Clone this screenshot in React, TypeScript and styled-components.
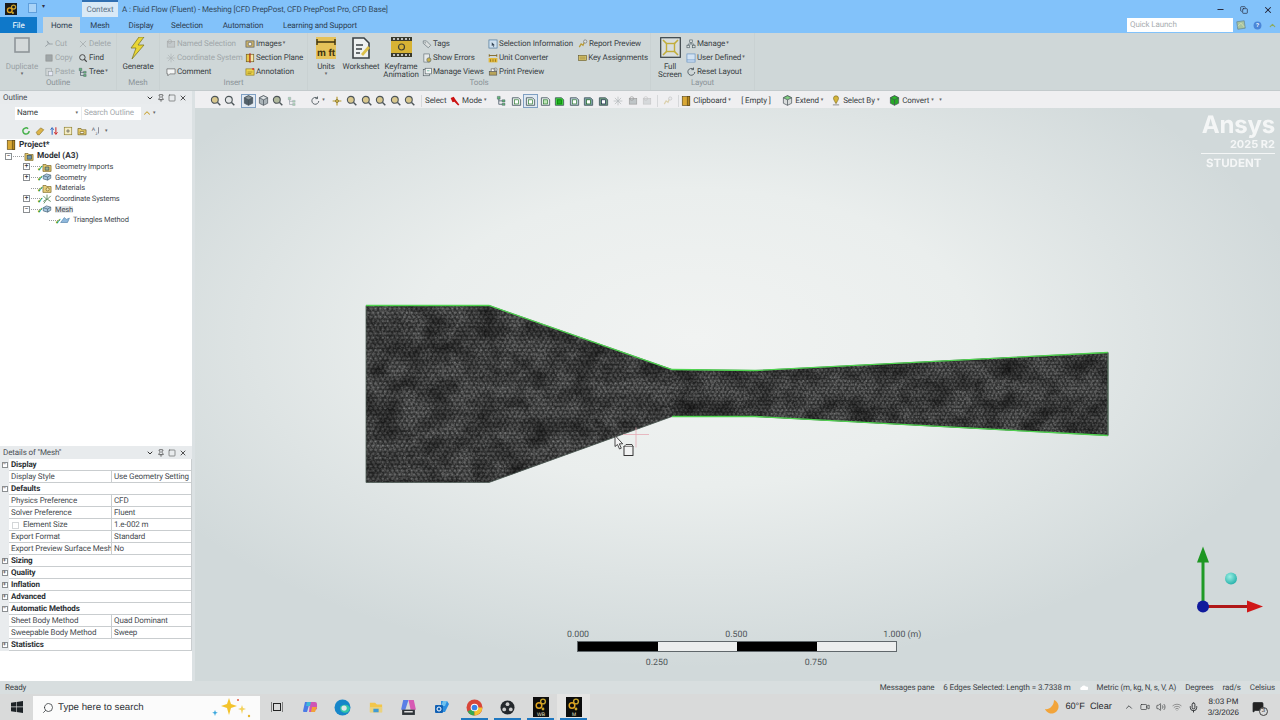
import React from "react";
import styled, { createGlobalStyle } from "styled-components";
import { Search, ChevronUp, Volume2, Wifi, Mic, MessageSquare, Minus, X, Pin, Square, ChevronDown, Video, Copy } from "lucide-react";

const FONT = `Roboto, "Noto Sans", "Liberation Sans", sans-serif`;

const Global = createGlobalStyle`
  * { box-sizing: border-box; }
  html, body { margin: 0; padding: 0; width: 1280px; height: 720px; overflow: hidden; }
  body { font: 8px/1 ${FONT}; letter-spacing: -0.12px; color: #3a3f44; background: #d8dede; text-rendering: geometricPrecision; }
`;

const Page = styled.div`
  display: flex;
  flex-direction: column;
  width: 1280px;
  height: 720px;
`;

/* ---------- icons ---------- */

const gold = "#c8a52c";
const glyphs: Record<string, React.ReactNode> = {
  scissors: <path d="M2 12l5-4 7 0M7 8l-2-5M5 3l4 5" fill="none" stroke="#8c9498" strokeWidth="1.6" />,
  copy: <rect x="3" y="3" width="10" height="10" fill="#8f9699" stroke="#777" />,
  paste: <><rect x="3" y="2" width="9" height="12" fill="#cfd3d4" stroke="#8c9498" /><rect x="7" y="7" width="7" height="7" fill="#eef" stroke="#8c9498" /></>,
  del: <path d="M3 3l10 10M13 3L3 13" stroke="#a4aaad" strokeWidth="1.6" />,
  find: <><circle cx="7" cy="7" r="4.4" fill="none" stroke="#444" strokeWidth="1.5" /><path d="M10 10l4 4" stroke="#444" strokeWidth="1.8" /></>,
  tree: <><path d="M2 2h4v4H2zM9 7h4v3H9zM9 12h4v3H9z" fill="#6b7" stroke="#345" strokeWidth=".6" /><path d="M4 6v7.5h5M4 8.5h5" fill="none" stroke="#345" /></>,
  named: <><rect x="2" y="4" width="12" height="9" fill="#bfc5c7" stroke="#999" /><circle cx="6" cy="4" r="3" fill="none" stroke="#999" /></>,
  coord: <path d="M8 1v14M1 8h14M3 3l10 10M13 3L3 13" stroke="#a8adb0" strokeWidth="1.2" />,
  pan: <><path d="M8 1v14M1 8h14" stroke="#b5952a" strokeWidth="1.8" /><circle cx="8" cy="8" r="2.4" fill="#d9bf52" stroke="#6a5a1a" /></>,
  comment: <path d="M1.5 3h13v8H6l-3 3v-3H1.5z" fill="#f4f6f6" stroke="#555" />,
  images: <><rect x="1.5" y="3" width="13" height="10" fill="#c9b26a" stroke="#555" /><circle cx="8" cy="8" r="3" fill="#eee" stroke="#555" /></>,
  section: <><rect x="2" y="2" width="6" height="12" fill="#e8c84a" stroke="#6a5313" /><rect x="8" y="2" width="6" height="12" fill="#f4e7a5" stroke="#6a5313" /><path d="M8 0v16" stroke="#c22" strokeWidth="1.4" /></>,
  annotation: <><rect x="1.5" y="3" width="13" height="10" fill="#ecd44f" stroke="#8a7414" /><path d="M4 8h8M4 10.5h6" stroke="#8a7414" /><circle cx="13" cy="3" r="1.6" fill="#d33" /></>,
  tags: <><path d="M2 3l5 0 7 7-4 4-8-7z" fill="#d9dddd" stroke="#5d6a70" /><circle cx="5" cy="6" r="1" fill="#5d6a70" /></>,
  errors: <><rect x="3" y="1.5" width="9" height="13" fill="#e6e9e9" stroke="#5d6a70" /><circle cx="11" cy="11" r="3.4" fill="#c9b24a" stroke="#5d6a70" /></>,
  views: <><rect x="2" y="4" width="10" height="10" fill="#e3e7e7" stroke="#4c5a5f" /><rect x="5" y="2" width="10" height="9" fill="#f3f5f5" stroke="#4c5a5f" /><path d="M8 6h4" stroke="#4a8" /></>,
  selinfo: <><rect x="1.5" y="1.5" width="13" height="13" fill="#cfe0ee" stroke="#3d6d96" /><path d="M6 5l5 5-2 0 1 3-1 0-1-3-2 1z" fill="#345" /></>,
  converter: <><path d="M2 4h12M2 2v4M14 2v4" stroke="#7a5a10" strokeWidth="1.3" fill="none" /><rect x="1" y="8" width="14" height="7" fill="#e2b93a" /><path d="M4 14v-4M8 14v-4M12 14v-4" stroke="#7a5a10" /></>,
  print: <><rect x="2" y="7" width="12" height="6" fill="#b8a45a" stroke="#555" /><rect x="5" y="3" width="6" height="4" fill="#fff" stroke="#555" /><circle cx="12" cy="4" r="2.6" fill="none" stroke="#777" /></>,
  report: <><path d="M2 13l3-5 3 2 3-7" stroke="#b89a35" strokeWidth="2" fill="none" /><circle cx="11.5" cy="4" r="2.6" fill="#dfe3e3" stroke="#666" /></>,
  keys: <><rect x="1" y="3.5" width="14" height="9" fill="#d9c46b" stroke="#5b5124" /><path d="M3 6.5h10M3 9.5h10" stroke="#8a7a34" /></>,
  manage: <><rect x="6" y="1.5" width="4" height="4" fill="#dfe3e3" stroke="#4a5a60" /><rect x="1.5" y="10" width="4" height="4" fill="#dfe3e3" stroke="#4a5a60" /><rect x="10.5" y="10" width="4" height="4" fill="#dfe3e3" stroke="#4a5a60" /><path d="M8 6v2M3.5 10V8h9v2" fill="none" stroke="#4a5a60" /></>,
  user: <><rect x="1.5" y="1.5" width="13" height="13" fill="#d3e3f3" stroke="#5b8bc0" /><path d="M1.5 11h13" stroke="#5b8bc0" /></>,
  reset: <path d="M12 3.5A5.5 5.5 0 1 0 14 8M12 .8v3.4H8.6" fill="none" stroke="#4a555a" strokeWidth="1.4" />,
  refresh: <path d="M13 8a5 5 0 1 1-1.6-3.7" fill="none" stroke="#46b04a" strokeWidth="2.4" />,
  eraser: <path d="M2 10l7-7 5 3-7 8H4z" fill="#dcb44a" stroke="#8a7020" />,
  sort: <><path d="M5 14V4M2.5 6L5 2.5 7.5 6" fill="none" stroke="#2b66c0" strokeWidth="1.6" /><path d="M11 2v10M8.5 10l2.5 3.5 2.5-3.5" fill="none" stroke="#cc2222" strokeWidth="1.6" /></>,
  expand: <><rect x="2" y="2" width="12" height="12" fill="#f4ecc4" stroke="#8a7a24" /><path d="M8 5v6M5 8h6" stroke="#444" /></>,
  folderx: <><path d="M1.5 4h5l1 2h7v8h-13z" fill="#e6cc6a" stroke="#6d5a1c" /><path d="M5 9h6v3H5z" fill="#fff" stroke="#6d5a1c" /></>,
  az: <><text x="1" y="8" fontSize="8" fill="#556" fontFamily="Liberation Sans">A</text><text x="7" y="15" fontSize="7" fill="#556" fontFamily="Liberation Sans">z</text><path d="M12 2v10" stroke="#556" /></>,
  book: <><rect x="2" y="1" width="12" height="14" fill="#d9a835" stroke="#5a4410" /><rect x="10" y="1" width="4" height="14" fill="#b78820" stroke="#5a4410" /></>,
  model: <><path d="M1.5 4h5l1 1.6h7V15h-13z" fill="#e3c76a" stroke="#6d5a1c" /><rect x="5" y="7" width="7" height="6" fill="#6b93a8" stroke="#345" /></>,
  geoimp: <><path d="M1.5 4h5l1 1.6h7V15h-13z" fill="#e3c76a" stroke="#6d5a1c" /><path d="M5 8h6v5H5z" fill="#9bb08c" stroke="#345" /></>,
  geo: <><path d="M2 6l5-3 7 2v5l-5 3-7-2z" fill="#a9c7de" stroke="#3b566a" /><path d="M2 6l7 2 5-3M9 8v5" fill="none" stroke="#3b566a" /></>,
  mats: <><path d="M1.5 4h5l1 1.6h7V15h-13z" fill="#e7cf7c" stroke="#6d5a1c" /><circle cx="9" cy="10" r="2.6" fill="#f0e2a8" stroke="#6d5a1c" /></>,
  axes: <path d="M8 8V1M8 8l6 4M8 8l-6 4M2 3l5 5M14 3L9 8M3 15l5-7" stroke="#4c7f4c" strokeWidth="1.3" fill="none" />,
  tri: <path d="M1 12L7 4l3 3 5-2-3 7z" fill="#8fb8dc" stroke="#4d7da6" />,
  map: <><rect x="2" y="2" width="12" height="12" fill="#a7c4a0" stroke="#5f7f8f" transform="rotate(-8 8 8)" /><path d="M3 10l5-5 5 6" stroke="#e6e6c0" fill="none" /></>,
  help: <><circle cx="8" cy="8" r="7" fill="#4a86d8" /><text x="8" y="11.500" textAnchor="middle" fontSize="10" fontWeight="700" fill="#fff" fontFamily="Liberation Sans">?</text></>,
};

const Glyph = ({ name, size = 9, opacity }: { name: string; size?: number; opacity?: number }) => (
  <svg width={size} height={size} viewBox="0 0 16 16" style={opacity ? { opacity } : undefined}>
    {glyphs[name]}
  </svg>
);

/* ---------- title bar ---------- */

const TitleBar = styled.header`
  background: #82c2fa;
  height: 33px;
  display: flex;
  flex-direction: column;
  flex: none;
`;

const TitleRow = styled.div`
  height: 17px;
  display: flex;
  align-items: stretch;
`;

const AppBadge = styled.div`
  width: 12px;
  height: 12px;
  margin: 3px 11px 0 5px;
  background: #1a1a1a;
  display: flex;
  align-items: center;
  justify-content: center;
  flex: none;
`;

const SaveIcon = styled.div`
  width: 9px;
  height: 10px;
  margin: 3px 5px 0 0;
  border: 1px solid #5f9fdc;
  background: #a9d3f7;
`;

const QuickCaret = styled.div`
  width: 40px;
  color: #334;
  font-size: 6px;
  padding-top: 4px;
`;

const ContextTab = styled.div`
  width: 36px;
  background: #d9e9f6;
  border-top: 2px solid #2f6fb2;
  color: #5d7488;
  display: flex;
  align-items: center;
  justify-content: center;
`;

const TitleText = styled.div`
  margin-left: 4px;
  padding-top: 3px;
  flex: 1;
  color: #33495c;
  display: flex;
  align-items: center;
`;

const WinButton = styled.div`
  width: 24px;
  color: #223;
  display: flex;
  align-items: center;
  justify-content: center;
  padding-top: 2px;
`;

const TabRow = styled.nav`
  height: 16px;
  display: flex;
  align-items: stretch;
`;

const Tab = styled.div<{ $w: number; $kind?: "file" | "active" }>`
  width: ${(p) => p.$w}px;
  padding-top: 1px;
  display: flex;
  align-items: center;
  justify-content: center;
  color: ${(p) => (p.$kind === "file" ? "#fff" : "#2d4052")};
  background: ${(p) => (p.$kind === "file" ? "#0f78c9" : p.$kind === "active" ? "#cfd7d8" : "transparent")};
`;

const TabSpacer = styled.div`
  flex: 1;
`;

const QuickLaunch = styled.div`
  width: 106px;
  height: 14px;
  margin-top: 1px;
  background: #fff;
  color: #a9adb0;
  padding-left: 3px;
  display: flex;
  align-items: center;
`;

const HelpIcons = styled.div`
  width: 47px;
  padding: 0 3px 0 3px;
  display: flex;
  align-items: center;
  justify-content: space-between;
`;

/* ---------- ribbon ---------- */

const Ribbon = styled.section`
  height: 58px;
  background: #cfd7d8;
  border-bottom: 1px solid #c3cacc;
  display: flex;
  flex: none;
`;

const Group = styled.div<{ $w: number }>`
  width: ${(p) => p.$w}px;
  display: flex;
  flex-direction: column;
  padding-top: 3px;
  border-right: 1px solid #c9d1d2;
`;

const GroupBody = styled.div`
  height: 42px;
  display: flex;
`;

const GroupLabel = styled.div`
  text-align: center;
  color: #8b9498;
  padding-top: 1px;
`;

const Big = styled.div<{ $w: number; $off?: boolean }>`
  width: ${(p) => p.$w}px;
  display: flex;
  flex-direction: column;
  align-items: center;
  color: ${(p) => (p.$off ? "#9aa2a6" : "#3a3f44")};
  line-height: 8px;
  text-align: center;
  flex: none;
`;

const BigIcon = styled.div`
  height: 27px;
  padding-top: 1px;
  display: flex;
  align-items: flex-start;
  justify-content: center;
  flex: none;
`;

const Caret = styled.span`
  color: #666;
  font-size: 5px;
  line-height: 7px;
`;

const SmallCol = styled.div<{ $w: number }>`
  width: ${(p) => p.$w}px;
  display: flex;
  flex-direction: column;
  flex: none;
`;

const SmallBtn = styled.div<{ $off?: boolean }>`
  height: 14px;
  padding-top: 1px;
  display: flex;
  align-items: center;
  gap: 1px;
  white-space: nowrap;
  color: ${(p) => (p.$off ? "#a0a7aa" : "#3a3f44")};
`;

const Small = ({ icon, text, off, menu }: { icon: string; text: string; off?: boolean; menu?: boolean }) => (
  <SmallBtn $off={off}>
    <Glyph name={icon} size={10} opacity={off ? 0.75 : undefined} />
    {text}
    {menu && <Caret>▾</Caret>}
  </SmallBtn>
);

const Gap = styled.div<{ $w: number }>`
  width: ${(p) => p.$w}px;
  flex: none;
`;

/* ---------- body ---------- */

const Body = styled.main`
  flex: 1;
  min-height: 0;
  display: flex;
`;

const LeftPanel = styled.aside`
  width: 195px;
  flex: none;
  display: flex;
  flex-direction: column;
  background: #e9ecee;
  border-right: 3px solid #dbe1e3;
`;

const PaneHead = styled.div`
  height: 13px;
  display: flex;
  align-items: center;
  padding: 1px 5px 0 3px;
  gap: 3px;
  color: #4a5055;
  background: #e8ebed;
  flex: none;
`;

const Dots = styled.div`
  flex: 1;
  height: 4px;
  background-image: radial-gradient(#b4b9bc 0.5px, transparent 0.6px);
  background-size: 2px 2px;
`;

const Grip = styled.div`
  width: 4px;
  height: 12px;
  flex: none;
  background-image: radial-gradient(#aeb3b6 0.5px, transparent 0.6px);
  background-size: 2px 2px;
`;

const PaneTools = styled.div`
  display: flex;
  align-items: center;
  gap: 3px;
  color: #333;
`;

const FilterRow = styled.div`
  height: 17px;
  display: flex;
  align-items: center;
  padding-left: 6px;
  padding-top: 1px;
  gap: 1px;
  flex: none;
`;

const NameBox = styled.div`
  width: 66px;
  height: 13px;
  margin-left: 4px;
  background: #fff;
  padding: 0 3px 0 2px;
  display: flex;
  align-items: center;
  justify-content: space-between;
  color: #3a3f44;
`;

const SearchBox = styled.div`
  width: 59px;
  height: 13px;
  background: #fff;
  padding-left: 2px;
  color: #a5aaad;
  display: flex;
  align-items: center;
`;

const IconRow = styled.div`
  height: 18px;
  display: flex;
  align-items: center;
  padding-left: 6px;
  padding-top: 2px;
  gap: 4px;
  flex: none;
`;

const Tree = styled.div`
  flex: 1;
  background: #fff;
  padding-top: 1px;
`;

const TreeRow = styled.div`
  height: 10.7px;
  display: flex;
  align-items: center;
  white-space: nowrap;
`;

const Indent = styled.div<{ $w: number }>`
  width: ${(p) => p.$w}px;
  flex: none;
`;

const Expander = styled.div`
  width: 7px;
  height: 7px;
  margin: 0 1px;
  border: 1px solid #8b8f92;
  background: #fff;
  color: #333;
  font-size: 7px;
  line-height: 4px;
  text-align: center;
  flex: none;
`;

const Connector = styled.div`
  width: 11px;
  height: 0;
  border-top: 1px dotted #9a9ea0;
  flex: none;
`;

const NoExpander = styled.div`
  width: 9px;
  flex: none;
`;

const Node = styled.div`
  position: relative;
  width: 10px;
  height: 10px;
  margin-right: 3px;
  flex: none;
`;

const Check = styled.span`
  position: absolute;
  left: -5px;
  top: 3px;
  color: #2c9a30;
  font-size: 8px;
  line-height: 8px;
  font-weight: 700;
`;

const TreeLabel = styled.span<{ $bold?: boolean; $sel?: boolean }>`
  font-size: ${(p) => (p.$bold ? "8.300px" : "7.500px")};
  letter-spacing: ${(p) => (p.$bold ? "0" : "-0.15px")};
  font-weight: ${(p) => (p.$bold ? 700 : 400)};
  color: ${(p) => (p.$bold ? "#2d3136" : "#454a4f")};
  background: ${(p) => (p.$sel ? "#e4e7e9" : "transparent")};
`;

const Details = styled.div`
  height: 235px;
  flex: none;
  display: flex;
  flex-direction: column;
  background: #fff;
`;

const DetailRow = styled.div`
  display: grid;
  grid-template-columns: 9px 103px 80px;
  height: 12px;
  background: #eef0f1;
`;

const Gutter = styled.div`
  display: flex;
  align-items: center;
  justify-content: center;
  background: #e9ecee;
`;

const DetailCell = styled.div<{ $span?: boolean; $head?: boolean }>`
  ${(p) => (p.$span ? "grid-column: 2 / 4;" : "")}
  display: flex;
  align-items: center;
  gap: 3px;
  padding: 1px 0 0 2px;
  background: #fff;
  border-right: 1px solid #c9cdcf;
  border-bottom: 1px solid #c9cdcf;
  white-space: nowrap;
  overflow: hidden;
  font-weight: ${(p) => (p.$head ? 700 : 400)};
  color: ${(p) => (p.$head ? "#2b2f33" : "#474c51")};
`;

const MiniExpander = styled(Expander)`
  width: 6px;
  height: 6px;
  margin: 0;
  font-size: 6px;
  line-height: 3px;
`;

const CheckBox = styled.span`
  width: 7px;
  height: 7px;
  margin-left: 1px;
  margin-right: 1px;
  border: 1px solid #d3d6d8;
`;

/* ---------- graphics area ---------- */

const Main = styled.div`
  flex: 1;
  min-width: 0;
  display: flex;
  flex-direction: column;
`;

const Toolbar = styled.div`
  height: 17px;
  background: #efeff1;
  display: flex;
  align-items: center;
  padding: 2px 0 0 5px;
  flex: none;
  color: #3a3f44;
`;

const Tool = styled.div<{ $sel?: boolean }>`
  width: 14.6px;
  height: 14px;
  display: flex;
  align-items: center;
  justify-content: center;
  flex: none;
  background: ${(p) => (p.$sel ? "#e1e9f2" : "transparent")};
  box-shadow: ${(p) => (p.$sel ? "inset 0 0 0 1px #7f9fc2" : "none")};
`;

const ToolText = styled.div<{ $w: number }>`
  width: ${(p) => p.$w}px;
  display: flex;
  align-items: center;
  gap: 2px;
  white-space: nowrap;
  flex: none;
`;

const Sep = styled.div<{ $w: number }>`
  width: ${(p) => p.$w}px;
  height: 12px;
  display: flex;
  justify-content: center;
  flex: none;
  &::after {
    content: "";
    width: 1px;
    background: #d6d8da;
  }
`;

const Viewport = styled.div`
  flex: 1;
  position: relative;
  overflow: hidden;
  background:
    radial-gradient(ellipse 620px 330px at 500px 230px, #f1f3f2 0%, #eaeeed 45%, rgba(226, 232, 232, 0) 100%),
    #d1d9da;
`;

const Canvas = styled.svg`
  position: absolute;
  inset: 0;
  width: 100%;
  height: 100%;
`;

const Brand = styled.div`
  position: absolute;
  right: 5px;
  top: 4px;
  width: 74px;
  color: #fff;
  opacity: 0.78;
  font-family: "Inter", "Liberation Sans", sans-serif;
  font-weight: 700;
  text-align: right;
  letter-spacing: 0;
`;

const BrandName = styled.div`
  font-size: 24px;
  line-height: 26px;
  letter-spacing: -0.2px;
`;

const BrandYear = styled.div`
  font-size: 11px;
  line-height: 13px;
  padding-bottom: 2px;
  border-bottom: 1px solid #fff;
`;

const BrandTier = styled.div`
  font-size: 11.5px;
  line-height: 19px;
  text-align: left;
  padding-left: 5px;
`;

const Scale = styled.div`
  position: absolute;
  left: 382px;
  top: 533px;
  width: 320px;
  height: 11px;
  display: grid;
  grid-template-columns: repeat(4, 1fr);
  border: 1px solid #60676b;
`;

const ScaleBlock = styled.div<{ $dark: boolean }>`
  background: ${(p) => (p.$dark ? "#000" : "#eceeee")};
`;

const ScaleTick = styled.span<{ $at: number; $low?: boolean }>`
  position: absolute;
  left: ${(p) => p.$at}%;
  top: ${(p) => (p.$low ? "16px" : "-12px")};
  transform: translateX(-50%);
  font-size: 8.8px;
  line-height: 10px;
  letter-spacing: 0;
  color: #4d5458;
  white-space: nowrap;
`;

/* ---------- status bar and task bar ---------- */

const StatusRow = styled.div`
  height: 13px;
  flex: none;
  display: flex;
  align-items: center;
  justify-content: space-between;
  background: #d8dedf;
  color: #3f4448;
  padding: 0 5px;
`;

const StatusRight = styled.div`
  display: flex;
  align-items: center;
  gap: 9px;
`;

const Taskbar = styled.footer`
  height: 26px;
  flex: none;
  background: #d9dada;
  display: flex;
  align-items: stretch;
  color: #26292c;
  letter-spacing: 0;
`;

const Start = styled.div`
  width: 33px;
  display: flex;
  align-items: center;
  justify-content: center;
`;

const SearchBar = styled.div`
  width: 227px;
  margin-top: 2px;
  background: #fbfbfb;
  display: flex;
  align-items: center;
  padding: 0 5px 0 9px;
  gap: 4px;
  font-size: 9.7px;
  color: #2e3236;
  font-family: "Liberation Sans", sans-serif;
`;

const SearchArt = styled.span`
  margin-left: auto;
  display: flex;
`;

const Slot = styled.div<{ $open?: boolean; $active?: boolean }>`
  width: 33px;
  display: flex;
  align-items: center;
  justify-content: center;
  background: ${(p) => (p.$active ? "#e4e4e3" : "transparent")};
  position: relative;
  &::after {
    content: "";
    display: ${(p) => (p.$open || p.$active ? "block" : "none")};
    position: absolute;
    left: 3px;
    right: 3px;
    bottom: 0;
    height: 2px;
    background: #1f78c1;
  }
`;

const Tray = styled.div`
  margin-left: auto;
  display: flex;
  align-items: center;
  padding-right: 16px;
  font-family: "Liberation Sans", sans-serif;
`;

const Weather = styled.div`
  display: flex;
  align-items: center;
  gap: 5px;
  font-size: 9.2px;
  margin-right: 12px;
`;

const TrayIcons = styled.div`
  display: flex;
  align-items: center;
  gap: 6px;
  margin-right: 9px;
`;

const Clock = styled.div`
  font-size: 8px;
  line-height: 11px;
  text-align: center;
  margin-right: 13px;
`;

const Notify = styled.div`
  position: relative;
  display: flex;
`;

const NotifyCount = styled.span`
  position: absolute;
  right: -4px;
  bottom: -3px;
  width: 9px;
  height: 9px;
  border: 1px solid #444;
  border-radius: 50%;
  background: #d9dada;
  font-size: 6px;
  line-height: 7px;
  text-align: center;
`;

/* ---------- drawings ---------- */

const GearLogo = ({ size }: { size: number }) => (
  <svg width={size} height={size} viewBox="0 0 16 16">
    <circle cx="11" cy="4.5" r="3" fill="none" stroke={gold} strokeWidth="1.8" />
    <circle cx="5.5" cy="9" r="3.4" fill="none" stroke="#e0a520" strokeWidth="2" />
    <circle cx="10" cy="13" r="1.6" fill={gold} />
  </svg>
);

const Bolt = () => (
  <svg width="18" height="23" viewBox="0 0 18 23">
    <path d="M10 0L2 11h5l-4 11 12-14h-6l6-8z" fill="#e9d534" stroke="#7e7a2a" strokeWidth=".8" />
  </svg>
);

const Units = () => (
  <svg width="20" height="22" viewBox="0 0 20 22">
    <rect width="20" height="22" fill="#e5c25a" />
    <path d="M1 5h18M1 2v6M19 2v6" stroke="#3c3210" strokeWidth="1.4" fill="none" />
    <text x="10" y="19" textAnchor="middle" fontSize="10" fontWeight="700" fill="#3c3210" fontFamily="Liberation Sans">m ft</text>
  </svg>
);

const Sheet = () => (
  <svg width="20" height="22" viewBox="0 0 20 22">
    <path d="M2 1h11l5 5v15H2z" fill="#eef1f1" stroke="#3b4144" strokeWidth="1.6" />
    <path d="M5 8h7M5 12h6M5 16h4" stroke="#3b4144" strokeWidth="1.3" />
    <path d="M10 17l7-8 2 2-7 8z" fill="#dcc04a" />
  </svg>
);

const Film = () => (
  <svg width="21" height="20" viewBox="0 0 21 20">
    <rect width="21" height="20" fill="#3a3a2c" />
    <rect y="4" width="21" height="12" fill="#d7b334" />
    <path d="M2 2h2M6 2h2M10 2h2M14 2h2M18 2h1M2 18h2M6 18h2M10 18h2M14 18h2M18 18h1" stroke="#eee" strokeWidth="1.5" />
    <circle cx="10.5" cy="10" r="3" fill="none" stroke="#443" strokeWidth="1.2" />
  </svg>
);

const FullScreen = () => (
  <svg width="21" height="21" viewBox="0 0 21 21">
    <rect x=".7" y=".7" width="19.6" height="19.6" fill="#d9dedd" stroke="#384045" strokeWidth="1.2" />
    <rect x="6.5" y="6.5" width="8" height="8" fill="none" stroke="#c2ad3a" strokeWidth="1.4" />
    <path d="M3 3l4 4M18 3l-4 4M3 18l4-4M18 18l-4-4" stroke="#c2ad3a" strokeWidth="1.6" />
  </svg>
);

const Zoom = ({ c = "#c7a63a" }: { c?: string }) => (
  <svg width="11" height="11" viewBox="0 0 16 16">
    <circle cx="7" cy="7" r="5" fill={c} fillOpacity=".55" stroke="#4d5559" strokeWidth="1.6" />
    <path d="M11 11l4 4" stroke="#4d5559" strokeWidth="2" />
  </svg>
);

const Cube = ({ top = "#dfe4e6", side = "#8d989e", off }: { top?: string; side?: string; off?: boolean }) => (
  <svg width="11" height="11" viewBox="0 0 16 16" style={off ? { opacity: 0.5 } : undefined}>
    <path d="M8 1l6 3v8l-6 3-6-3V4z" fill={side} stroke="#465057" />
    <path d="M2 4l6 3 6-3-6-3z" fill={top} stroke="#465057" />
    <path d="M8 7v8" stroke="#465057" />
  </svg>
);

const SelBox = ({ fill = "#e9eced", mark = "#2e7d32", front = "#fff" }: { fill?: string; mark?: string; front?: string }) => (
  <svg width="11" height="11" viewBox="0 0 16 16">
    <path d="M2 4h9l3 3v8H2z" fill={fill} stroke="#43565f" strokeWidth="1.2" />
    <rect x="5" y="7" width="6" height="6" fill={front} stroke={mark} />
  </svg>
);

const Win = () => (
  <svg width="12" height="12" viewBox="0 0 12 12" fill="#1d2226">
    <path d="M0 1.7L5 1v4.6H0zM5.6.9L12 0v5.6H5.6zM0 6.2h5v4.7l-5-.7zM5.6 6.2H12V12l-6.4-.9z" />
  </svg>
);

const Sparkle = () => (
  <svg width="44" height="22" viewBox="0 0 44 22">
    <path d="M18 1l2 6 6 2-6 2-2 7-2-7-6-2 6-2z" fill="#f3c32c" />
    <path d="M31 8l1 3 3 1-3 1-1 4-1-4-3-1 3-1z" fill="#f3d25c" />
    <circle cx="27" cy="3" r="1" fill="#e2553d" />
    <path d="M4 13l.8 2 2 .8-2 .8L4 19l-.8-2.400-2-.8 2-.8z" fill="#3aa7dd" />
    <circle cx="38" cy="19" r="1.200" fill="#e6b52e" />
  </svg>
);

const Copilot = () => (
  <svg width="16" height="16" viewBox="0 0 16 16">
    <path d="M3 3h5L5 13H2a1 1 0 0 1-1-1z" fill="#4a7be6" />
    <path d="M8 3h5a2 2 0 0 1 2 2v5l-5 3H7z" fill="#cf55b4" />
    <path d="M5 3h4l-1 4H4z" fill="#3fb6d8" />
    <path d="M10 8h5l-2 5h-4z" fill="#f2a13a" />
  </svg>
);

const Edge = () => (
  <svg width="17" height="17" viewBox="0 0 16 16">
    <circle cx="8" cy="8" r="7.500" fill="#1686c9" />
    <path d="M15 9a5 4 0 0 0-9-2c-1 3 1 6 5 6 2 0 3-1 4-4z" fill="#33c6a8" />
    <circle cx="9.500" cy="8.500" r="2.500" fill="#dfe6e6" />
  </svg>
);

const Folder = () => (
  <svg width="14" height="14" viewBox="0 0 16 16">
    <path d="M1 3h6l2 2h6v9H1z" fill="#f2c64a" />
    <rect x="1" y="8" width="14" height="6" fill="#e9d27f" />
    <rect x="5" y="10" width="6" height="4" fill="#3f9bd4" />
  </svg>
);

const Store = () => (
  <svg width="17" height="17" viewBox="0 0 16 16">
    <path d="M3 1h5L5 10H1z" fill="#5a7fe6" />
    <path d="M8 1h5l2 9h-5z" fill="#d75ab4" />
    <rect x="2" y="10" width="12" height="5" fill="#2e3338" />
    <path d="M4 12h8" stroke="#ddd" strokeWidth="1.400" />
  </svg>
);

const Outlook = () => (
  <svg width="16" height="16" viewBox="0 0 16 16">
    <path d="M7 2h6l2 3-4 8H7z" fill="#2c8fe0" />
    <path d="M9 2l4 0-2 5H7z" fill="#70c2ee" />
    <rect x="1" y="6" width="8" height="8" rx="1" fill="#1261b4" />
    <circle cx="5" cy="10" r="2" fill="none" stroke="#fff" />
  </svg>
);

const Chrome = () => (
  <svg width="17" height="17" viewBox="0 0 16 16">
    <circle cx="8" cy="8" r="7.500" fill="#d8463a" />
    <path d="M8 8L1.500 11.700A7.500 7.500 0 0 0 8 15.500z" fill="#36a852" />
    <path d="M8 8h7.400A7.500 7.500 0 0 1 8 15.500z" fill="#f4c430" />
    <circle cx="8" cy="8" r="3.600" fill="#fff" />
    <circle cx="8" cy="8" r="2.700" fill="#3c82e6" />
  </svg>
);

const Obs = () => (
  <svg width="15" height="15" viewBox="0 0 16 16">
    <circle cx="8" cy="8" r="7.500" fill="#24282c" />
    <circle cx="8" cy="4.500" r="2" fill="#ccc" />
    <circle cx="4.500" cy="10" r="2" fill="#ccc" />
    <circle cx="11.500" cy="10" r="2" fill="#ccc" />
  </svg>
);

const AppTile = ({ label }: { label?: string }) => (
  <svg width="16" height="20" viewBox="0 0 16 20">
    <rect width="16" height="20" fill="#0d0d0d" />
    <circle cx="10" cy="4.500" r="2.400" fill="none" stroke={gold} strokeWidth="1.400" />
    <circle cx="6" cy="8.500" r="2.800" fill="none" stroke="#e0a520" strokeWidth="1.500" />
    <circle cx="10" cy="12" r="1.400" fill={gold} />
    <text x="8" y="18.500" textAnchor="middle" fontSize="5" fill="#e6e2c8" fontFamily="Liberation Sans">{label}</text>
  </svg>
);

/* ---------- mesh ---------- */

const outline =
  "366,306 489,306 672,370 755,371 1108,353 1108,436 755,417 672,417 489,483 366,483";

const MeshDrawing = () => (
  <Canvas viewBox="195 109 1085 572">
    <defs>
      <pattern id="tri" width="4.8" height="8.3" patternUnits="userSpaceOnUse">
        <rect width="4.8" height="8.3" fill="#2e2f2f" />
        <circle cx="1.2" cy="2" r="1.1" fill="#7c7e7e" />
        <circle cx="3.6" cy="6.150" r="1.1" fill="#7c7e7e" />
      </pattern>
      <pattern id="triFine" width="4.2" height="7.300" patternUnits="userSpaceOnUse">
        <rect width="4.2" height="7.300" fill="#2e2f2f" />
        <circle cx="1" cy="1.800" r="1" fill="#787a7a" />
        <circle cx="3.100" cy="5.450" r="1" fill="#787a7a" />
      </pattern>
      <clipPath id="duct">
        <polygon points={outline} />
      </clipPath>
      {/* patches where the triangles bunch up */}
      <filter id="blotch" x="0" y="0" width="100%" height="100%">
        <feTurbulence type="fractalNoise" baseFrequency="0.04 0.05" numOctaves="3" seed="7" />
        <feColorMatrix values="0 0 0 0 0  0 0 0 0 0  0 0 0 0 0  1.100 0 0 0 -0.380" />
      </filter>
      <filter id="speckle" x="0" y="0" width="100%" height="100%">
        <feTurbulence type="fractalNoise" baseFrequency="0.45" numOctaves="2" seed="3" />
        <feColorMatrix values="0 0 0 0 0.1  0 0 0 0 0.1  0 0 0 0 0.1  3 0 0 0 -1.200" />
      </filter>
      <radialGradient id="ball" cx="40%" cy="35%" r="65%">
        <stop offset="0" stopColor="#9af0e4" />
        <stop offset="1" stopColor="#2ab3ac" />
      </radialGradient>
    </defs>
    <polygon points={outline} fill="url(#tri)" />
    <polygon points="672,370 755,371 1108,353 1108,436 755,417 672,417" fill="url(#triFine)" />
    <g clipPath="url(#duct)">
      <rect x="366" y="306" width="742" height="177" filter="url(#speckle)" />
      <rect x="366" y="306" width="742" height="177" filter="url(#blotch)" />
    </g>
    <polygon points={outline} fill="none" stroke="#4c5a54" strokeWidth=".8" />
    <polyline points="366,306 489,306 672,370 755,371 1108,353" fill="none" stroke="#4fd34f" strokeWidth="1.300" />
    <polyline points="672,417 755,417 1108,436" fill="none" stroke="#4fd34f" strokeWidth="1.300" />
    <path d="M1108 353v83" stroke="#4f6a56" strokeWidth="1" />

    {/* pointer over the model */}
    <path d="M623 435h26M636 428v20" stroke="#e5a9b4" strokeWidth=".8" />
    <path d="M615 436v11l2.500-2 2 4.500 1.800-.8-2-4.400h3.400z" fill="#f4f4f4" stroke="#222" strokeWidth=".8" />
    <rect x="624" y="447" width="9" height="9" fill="#f2f3f3" stroke="#222" strokeWidth=".9" />
    <path d="M624 447l2-2h6l1 2" fill="#ddd" stroke="#222" strokeWidth=".8" />

    {/* triad */}
    <rect x="1201.500" y="560" width="3" height="47" fill="#1f9a26" />
    <path d="M1203 547l6 16h-12z" fill="#1e9622" />
    <rect x="1203" y="605.500" width="44" height="3" fill="#b01818" />
    <path d="M1263 607l-16 6v-12z" fill="#d01818" />
    <circle cx="1203" cy="607" r="6" fill="#101a9c" />
    <circle cx="1231" cy="579" r="6" fill="url(#ball)" />
  </Canvas>
);

/* ---------- data ---------- */

type DetailItem = { head: string; open?: boolean; rows?: [string, string, boolean?][] };

const details: DetailItem[] = [
  { head: "Display", open: true, rows: [["Display Style", "Use Geometry Setting"]] },
  {
    head: "Defaults",
    open: true,
    rows: [
      ["Physics Preference", "CFD"],
      ["Solver Preference", "Fluent"],
      ["Element Size", "1.e-002 m", true],
      ["Export Format", "Standard"],
      ["Export Preview Surface Mesh", "No"],
    ],
  },
  { head: "Sizing" },
  { head: "Quality" },
  { head: "Inflation" },
  { head: "Advanced" },
  {
    head: "Automatic Methods",
    open: true,
    rows: [
      ["Sheet Body Method", "Quad Dominant"],
      ["Sweepable Body Method", "Sweep"],
    ],
  },
  { head: "Statistics" },
];

type TreeNode = { label: string; icon: string; indent: number; exp?: "+" | "−"; check?: boolean; bold?: boolean; sel?: boolean };

const treeNodes: TreeNode[] = [
  { label: "Model (A3)", icon: "model", indent: 4, exp: "−", bold: true },
  { label: "Geometry Imports", icon: "geoimp", indent: 22, exp: "+", check: true },
  { label: "Geometry", icon: "geo", indent: 22, exp: "+", check: true },
  { label: "Materials", icon: "mats", indent: 22, check: true },
  { label: "Coordinate Systems", icon: "axes", indent: 22, exp: "+", check: true },
  { label: "Mesh", icon: "geo", indent: 22, exp: "−", check: true, sel: true },
  { label: "Triangles Method", icon: "tri", indent: 40, check: true },
];

const PaneButtons = () => (
  <PaneTools>
    <ChevronDown size={8} strokeWidth={3} />
    <Pin size={8} strokeWidth={2} />
    <Square size={8} strokeWidth={1.500} />
    <X size={8} strokeWidth={2.500} />
  </PaneTools>
);

export default function App() {
  return (
    <Page>
      <Global />
      <TitleBar>
        <TitleRow>
          <AppBadge>
            <GearLogo size={11} />
          </AppBadge>
          <SaveIcon />
          <QuickCaret>▾</QuickCaret>
          <ContextTab>Context</ContextTab>
          <TitleText>A : Fluid Flow (Fluent) - Meshing [CFD PrepPost, CFD PrepPost Pro, CFD Base]</TitleText>
          <WinButton>
            <Minus size={9} strokeWidth={2.500} />
          </WinButton>
          <WinButton>
            <Copy size={8} strokeWidth={2} />
          </WinButton>
          <WinButton>
            <X size={10} strokeWidth={2.500} />
          </WinButton>
        </TitleRow>
        <TabRow>
          <Tab $w={37} $kind="file">File</Tab>
          <Gap $w={6} />
          <Tab $w={37} $kind="active">Home</Tab>
          <Tab $w={40}>Mesh</Tab>
          <Tab $w={42}>Display</Tab>
          <Tab $w={50}>Selection</Tab>
          <Tab $w={62}>Automation</Tab>
          <Tab $w={92}>Learning and Support</Tab>
          <TabSpacer />
          <QuickLaunch>Quick Launch</QuickLaunch>
          <HelpIcons>
            <Glyph name="map" size={10} />
            <Glyph name="help" size={9} />
            <ChevronUp size={9} color="#8cab62" strokeWidth={3} />
          </HelpIcons>
        </TabRow>
      </TitleBar>

      <Ribbon>
        <Group $w={117}>
          <GroupBody>
            <Big $w={44} $off>
              <BigIcon>
                <svg width="16" height="16" viewBox="0 0 16 16">
                  <rect x="1" y="1" width="14" height="14" fill="#d4d9da" stroke="#8e9599" strokeWidth="1.600" />
                </svg>
              </BigIcon>
              Duplicate
              <Caret>▾</Caret>
            </Big>
            <SmallCol $w={34}>
              <Small icon="scissors" text="Cut" off />
              <Small icon="copy" text="Copy" off />
              <Small icon="paste" text="Paste" off />
            </SmallCol>
            <SmallCol $w={38}>
              <Small icon="del" text="Delete" off />
              <Small icon="find" text="Find" />
              <Small icon="tree" text="Tree" menu />
            </SmallCol>
          </GroupBody>
          <GroupLabel>Outline</GroupLabel>
        </Group>

        <Group $w={43}>
          <GroupBody>
            <Big $w={42}>
              <BigIcon>
                <Bolt />
              </BigIcon>
              Generate
            </Big>
          </GroupBody>
          <GroupLabel>Mesh</GroupLabel>
        </Group>

        <Group $w={148}>
          <GroupBody>
            <Gap $w={6} />
            <SmallCol $w={79}>
              <Small icon="named" text="Named Selection" off />
              <Small icon="coord" text="Coordinate System" off />
              <Small icon="comment" text="Comment" />
            </SmallCol>
            <SmallCol $w={62}>
              <Small icon="images" text="Images" menu />
              <Small icon="section" text="Section Plane" />
              <Small icon="annotation" text="Annotation" />
            </SmallCol>
          </GroupBody>
          <GroupLabel>Insert</GroupLabel>
        </Group>

        <Group $w={343}>
          <GroupBody>
            <Gap $w={2} />
            <Big $w={32}>
              <BigIcon>
                <Units />
              </BigIcon>
              Units
              <Caret>▾</Caret>
            </Big>
            <Big $w={38}>
              <BigIcon>
                <Sheet />
              </BigIcon>
              Worksheet
            </Big>
            <Big $w={42}>
              <BigIcon>
                <Film />
              </BigIcon>
              Keyframe Animation
            </Big>
            <SmallCol $w={66}>
              <Small icon="tags" text="Tags" />
              <Small icon="errors" text="Show Errors" />
              <Small icon="views" text="Manage Views" />
            </SmallCol>
            <SmallCol $w={90}>
              <Small icon="selinfo" text="Selection Information" />
              <Small icon="converter" text="Unit Converter" />
              <Small icon="print" text="Print Preview" />
            </SmallCol>
            <SmallCol $w={70}>
              <Small icon="report" text="Report Preview" />
              <Small icon="keys" text="Key Assignments" />
            </SmallCol>
          </GroupBody>
          <GroupLabel>Tools</GroupLabel>
        </Group>

        <Group $w={104}>
          <GroupBody>
            <Gap $w={6} />
            <Big $w={26}>
              <BigIcon>
                <FullScreen />
              </BigIcon>
              Full Screen
            </Big>
            <Gap $w={3} />
            <SmallCol $w={68}>
              <Small icon="manage" text="Manage" menu />
              <Small icon="user" text="User Defined" menu />
              <Small icon="reset" text="Reset Layout" />
            </SmallCol>
          </GroupBody>
          <GroupLabel>Layout</GroupLabel>
        </Group>
      </Ribbon>

      <Body>
        <LeftPanel>
          <PaneHead>
            Outline
            <Dots />
            <PaneButtons />
          </PaneHead>
          <FilterRow>
            <Grip />
            <NameBox>
              Name
              <Caret>▾</Caret>
            </NameBox>
            <SearchBox>Search Outline</SearchBox>
            <ChevronUp size={10} color="#c9a22f" strokeWidth={2.500} />
            <Caret>▾</Caret>
          </FilterRow>
          <IconRow>
            <Grip />
            <Gap $w={3} />
            <Glyph name="refresh" size={10} />
            <Glyph name="eraser" size={10} />
            <Glyph name="sort" size={10} />
            <Glyph name="expand" size={10} />
            <Glyph name="folderx" size={10} />
            <Glyph name="az" size={10} />
            <Caret>▾</Caret>
          </IconRow>
          <Tree>
            <TreeRow>
              <Indent $w={6} />
              <Node>
                <Glyph name="book" size={10} />
              </Node>
              <TreeLabel $bold>Project*</TreeLabel>
            </TreeRow>
            {treeNodes.map((n) => (
              <TreeRow key={n.label}>
                <Indent $w={n.indent} />
                {n.exp ? <Expander>{n.exp}</Expander> : <NoExpander />}
                <Connector />
                <Node>
                  <Glyph name={n.icon} size={10} />
                  {n.check && <Check>✓</Check>}
                </Node>
                <TreeLabel $bold={n.bold} $sel={n.sel}>
                  {n.label}
                </TreeLabel>
              </TreeRow>
            ))}
          </Tree>
          <Details>
            <PaneHead>
              Details of "Mesh"
              <Dots />
              <PaneButtons />
            </PaneHead>
            {details.map((d) => (
              <React.Fragment key={d.head}>
                <DetailRow>
                  <Gutter>
                    <MiniExpander>{d.open ? "−" : "+"}</MiniExpander>
                  </Gutter>
                  <DetailCell $span $head>
                    {d.head}
                  </DetailCell>
                </DetailRow>
                {d.rows?.map(([k, v, box]) => (
                  <DetailRow key={k}>
                    <Gutter />
                    <DetailCell>
                      {box && <CheckBox />}
                      {k}
                    </DetailCell>
                    <DetailCell>{v}</DetailCell>
                  </DetailRow>
                ))}
              </React.Fragment>
            ))}
          </Details>
        </LeftPanel>

        <Main>
          <Toolbar>
            <Grip />
            <Gap $w={4} />
            <Tool><Zoom /></Tool>
            <Tool><Zoom c="#dde0e0" /></Tool>
            <Gap $w={4} />
            <Tool $sel><Cube top="#8d989e" side="#51606a" /></Tool>
            <Tool><Cube side="#aab3b8" /></Tool>
            <Tool><Zoom c="#7c8b55" /></Tool>
            <Tool><Glyph name="tree" size={10} opacity={0.5} /></Tool>
            <Gap $w={8} />
            <Tool><Glyph name="reset" size={10} /></Tool>
            <Caret>▾</Caret>
            <Gap $w={5} />
            <Tool><Glyph name="pan" size={10} /></Tool>
            <Tool><Zoom /></Tool>
            <Tool><Zoom /></Tool>
            <Tool><Zoom /></Tool>
            <Tool><Zoom /></Tool>
            <Tool><Zoom /></Tool>
            <Sep $w={8} />
            <ToolText $w={25}>Select</ToolText>
            <ToolText $w={44}>
              <svg width="10" height="10" viewBox="0 0 16 16">
                <path d="M1 3l5-2 3 5 6 8-2 1-6-6-3 1z" fill="#c11" />
              </svg>
              Mode<Caret>▾</Caret>
            </ToolText>
            <Tool><Glyph name="tree" size={11} /></Tool>
            <Tool><SelBox /></Tool>
            <Tool $sel><SelBox /></Tool>
            <Tool><SelBox front="#bfe7b8" /></Tool>
            <Tool><SelBox fill="#3fcf3f" mark="#0a7a0a" front="#1fb01f" /></Tool>
            <Tool><SelBox fill="#b7c6d2" /></Tool>
            <Tool><SelBox fill="#7fa0a8" mark="#1a6a1a" /></Tool>
            <Tool><SelBox fill="#6f9c80" mark="#124" /></Tool>
            <Tool><Glyph name="coord" size={10} opacity={0.8} /></Tool>
            <Tool><Glyph name="named" size={10} /></Tool>
            <Tool><Glyph name="named" size={10} opacity={0.5} /></Tool>
            <Sep $w={6} />
            <Tool><Glyph name="report" size={10} opacity={0.35} /></Tool>
            <Sep $w={6} />
            <ToolText $w={60}>
              <Glyph name="book" size={10} />
              Clipboard<Caret>▾</Caret>
            </ToolText>
            <ToolText $w={41}>[ Empty ]</ToolText>
            <ToolText $w={49}>
              <Cube top="#7fce7f" side="#d9dcdc" />
              Extend<Caret>▾</Caret>
            </ToolText>
            <ToolText $w={58}>
              <svg width="10" height="11" viewBox="0 0 16 16">
                <path d="M3 15h10" stroke="#555" />
                <path d="M8 13C5 8 4 6 4 4.500a4 4 0 0 1 8 0C12 6 11 8 8 13z" fill="#d4b43a" stroke="#7a661a" />
              </svg>
              Select By<Caret>▾</Caret>
            </ToolText>
            <ToolText $w={50}>
              <Cube top="#28b828" side="#28a828" />
              Convert<Caret>▾</Caret>
            </ToolText>
            <Caret>▾</Caret>
          </Toolbar>

          <Viewport>
            <MeshDrawing />
            <Brand>
              <BrandName>Ansys</BrandName>
              <BrandYear>2025 R2</BrandYear>
              <BrandTier>STUDENT</BrandTier>
            </Brand>
            <Scale>
              <ScaleBlock $dark />
              <ScaleBlock $dark={false} />
              <ScaleBlock $dark />
              <ScaleBlock $dark={false} />
              <ScaleTick $at={0}>0.000</ScaleTick>
              <ScaleTick $at={49.800}>0.500</ScaleTick>
              <ScaleTick $at={102}>1.000 (m)</ScaleTick>
              <ScaleTick $at={24.800} $low>0.250</ScaleTick>
              <ScaleTick $at={74.800} $low>0.750</ScaleTick>
            </Scale>
          </Viewport>
        </Main>
      </Body>

      <StatusRow>
        <span>Ready</span>
        <StatusRight>
          <span>Messages pane</span>
          <span>6 Edges Selected: Length = 3.7338 m</span>
          <Gap $w={8}>
            <svg width="8" height="5" viewBox="0 0 10 6" fill="#fff">
              <path d="M1 6a2 2 0 0 1 1-3.500A3 3 0 0 1 7.500 2 2 2 0 0 1 9 6z" />
            </svg>
          </Gap>
          <span>Metric (m, kg, N, s, V, A)</span>
          <span>Degrees</span>
          <span>rad/s</span>
          <span>Celsius</span>
        </StatusRight>
      </StatusRow>

      <Taskbar>
        <Start>
          <Win />
        </Start>
        <SearchBar>
          <Search size={12} strokeWidth={1.500} style={{ transform: "scaleX(-1)" }} />
          Type here to search
          <SearchArt>
            <Sparkle />
          </SearchArt>
        </SearchBar>
        <Slot>
          <svg width="12" height="12" viewBox="0 0 12 12" fill="none" stroke="#222">
            <rect x="2.500" y="2.500" width="7" height="7" />
            <path d="M0 1v10M12 1v10" />
          </svg>
        </Slot>
        <Slot><Copilot /></Slot>
        <Slot><Edge /></Slot>
        <Slot><Folder /></Slot>
        <Slot><Store /></Slot>
        <Slot><Outlook /></Slot>
        <Slot $open><Chrome /></Slot>
        <Slot $open><Obs /></Slot>
        <Slot $open><AppTile label="WB" /></Slot>
        <Slot $active><AppTile label="M" /></Slot>
        <Tray>
          <Weather>
            <svg width="16" height="16" viewBox="0 0 16 16">
              <path d="M10 1a7 7 0 1 1-9 9c4 1 9-3 9-9z" fill="#f2a43a" />
            </svg>
            <span>60°F</span>
            <span>Clear</span>
          </Weather>
          <TrayIcons>
            <ChevronUp size={10} strokeWidth={1.800} />
            <Video size={10} strokeWidth={1.500} />
            <Volume2 size={10} strokeWidth={1.500} />
            <Wifi size={10} strokeWidth={1.500} color="#666" />
            <Mic size={11} strokeWidth={2} />
          </TrayIcons>
          <Clock>
            8:03 PM
            <br />
            3/3/2026
          </Clock>
          <Notify>
            <MessageSquare size={12} fill="#222" strokeWidth={1.500} />
            <NotifyCount>3</NotifyCount>
          </Notify>
        </Tray>
      </Taskbar>
    </Page>
  );
}
